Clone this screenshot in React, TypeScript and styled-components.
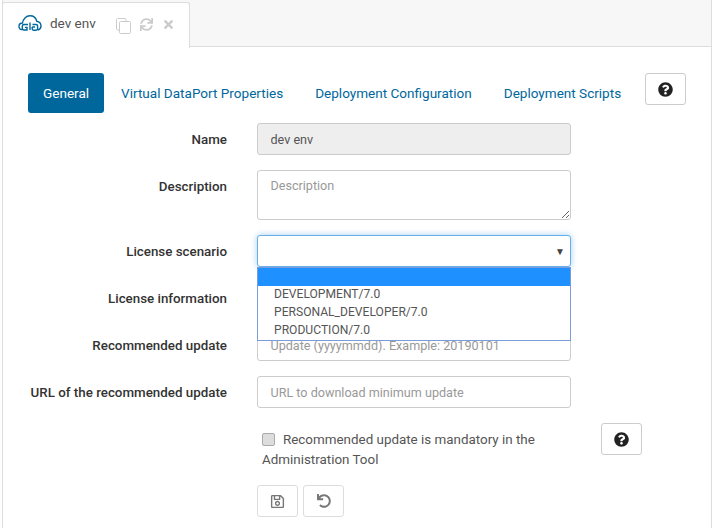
import { createGlobalStyle, styled } from 'styled-components';
import { FaQuestionCircle, FaRegSave, FaSync, FaTimes, FaUndo } from 'react-icons/fa';

const GlobalStyle = createGlobalStyle`
  html, body {
    margin: 0;
    padding: 0;
    background: #fff;
    height: 100%;
    overflow: hidden;
  }
  * { box-sizing: border-box; }
  body {
    font-family: Roboto, "Liberation Sans", sans-serif;
    font-size: 12.6px;
    color: #555;
  }
`;

const Page = styled.div`
  width: 710px;
  height: 528px;
  margin-left: 2px;
  border-left: 1px solid #ddd;
  border-right: 1px solid #ddd;
  position: relative;
`;

const TabStrip = styled.div`
  height: 47px;
  padding-top: 2px;
  background: #f7f7f7;
  border-bottom: 1px solid #ddd;
  display: flex;
`;

const DocTab = styled.div`
  width: 188px;
  height: 46px;
  margin-left: -1px;
  background: #fff;
  border: 1px solid #ddd;
  border-bottom: 0;
  border-radius: 3px 3px 0 0;
  padding: 11px 0 0 15px;
  display: flex;
  align-items: flex-start;
`;

const DocTitle = styled.span`
  margin-left: 8px;
  line-height: 18px;
  width: 66px;
  font-size: 13.5px;
  color: #555;
`;

const DocAction = styled.span`
  color: #ccc;
  display: flex;
  margin-top: 4px;
  margin-right: 9px;
`;

const Body = styled.div`
  padding: 26px 0 0 25px;
`;

const Nav = styled.div`
  display: flex;
  align-items: flex-start;
  height: 50px;
`;

const Pill = styled.a<{ $active?: boolean }>`
  height: 40px;
  padding: 0 15px;
  display: flex;
  align-items: center;
  border-radius: 3px;
  margin-right: 2px;
  background: ${(p) => (p.$active ? '#00679c' : 'transparent')};
  color: ${(p) => (p.$active ? '#fff' : '#00679c')};
  font-size: 13.55px;
`;

const IconButton = styled.button`
  width: 41px;
  height: 32px;
  background: #fff;
  border: 1px solid #ccc;
  border-radius: 3px;
  display: flex;
  align-items: center;
  justify-content: center;
  padding: 0;
  color: #222;
  font-size: 15px;
`;

const MutedButton = styled(IconButton)`
  color: #777;
  border-color: #ddd;
`;

const NavHelp = styled(IconButton)`
  margin-left: 7px;
`;

const Row = styled.div`
  display: flex;
  margin-bottom: 15px;
`;

const Label = styled.label`
  width: 199px;
  text-align: right;
  font-weight: 500;
  font-size: 13.35px;
  color: #333;
  padding-top: 8px;
  line-height: 18px;
  margin-right: 30px;
  white-space: nowrap;
`;

const Input = styled.input`
  width: 314px;
  height: 32px;
  border: 1px solid #ccc;
  border-radius: 3px;
  padding: 0 12.5px;
  font: inherit;
  color: #555;
  background: #fff;
  &:disabled { background: #eee; }
  &::placeholder { color: #999; opacity: 1; }
`;

const TextArea = styled.textarea`
  width: 314px;
  height: 50px;
  border: 1px solid #ccc;
  border-radius: 3px;
  padding: 7px 12.5px;
  font: inherit;
  &::placeholder { color: #999; opacity: 1; }
`;

const SelectWrap = styled.div`
  position: relative;
  width: 314px;
  height: 32px;
`;

const SelectBox = styled.div`
  height: 32px;
  border: 1px solid #66afe9;
  border-radius: 3px;
  box-shadow: 0 0 6px rgba(102, 175, 233, 0.6);
  background: #fff;
  display: flex;
  align-items: center;
  justify-content: flex-end;
  padding-right: 5px;
  font-size: 10px;
  color: #444;
`;

const Dropdown = styled.ul`
  position: absolute;
  left: 0;
  top: 32px;
  width: 314px;
  height: 74px;
  margin: 0;
  padding: 0;
  list-style: none;
  background: #fff;
  border: 1px solid #7a9cd8;
  z-index: 5;
`;

const Option = styled.li<{ $selected?: boolean }>`
  height: 18px;
  line-height: 16px;
  padding-left: 16px;
  font-size: 12.1px;
  color: #555;
  background: ${(p) => (p.$selected ? '#1e90ff' : 'transparent')};
`;

const CheckRow = styled.div`
  display: flex;
  margin-left: 229px;
  margin-bottom: 30px;
`;

const CheckText = styled.div`
  width: 295px;
  line-height: 20px;
  padding: 7px 0 0 5px;
  font-size: 13.4px;
  height: 32px;
`;

const Check = styled.input`
  appearance: none;
  width: 13px;
  height: 13px;
  margin: 0 8px 0 0;
  vertical-align: -2px;
  background: #ddd;
  border: 1px solid #aaa;
  border-radius: 2px;
`;

const CheckHelp = styled(IconButton)`
  margin-left: 49px;
`;

const Actions = styled.div`
  display: flex;
  gap: 5px;
  margin-left: 229px;
`;

const CloudLogo = () => (
  <svg width="24" height="18" viewBox="0 0 24 18" fill="none" stroke="#00679c" strokeWidth="1.4">
    <path d="M4 15.5H3.5C2 15.5 1 14 1 12.5C1 10.5 2.5 9 4.5 9C5 5 8 1.8 12 1.8C15.5 1.8 18 4.2 18.7 7.2C21 7.6 23 9.5 23 12C23 14 21.8 15.5 20 16" />
    <path d="M10 10.5H6C5 10.5 4.3 11.2 4.3 12V14.5C4.3 15.4 5 16 6 16H9V13.4H7" />
    <path d="M12 8.5V16" />
    <path d="M14.2 13V14.8C14.2 15.5 14.8 16.2 15.6 16.2H18C19 16.2 19.6 15.5 19.6 14.8V12C19.6 11.2 19 10.5 18 10.5H14.5M14.2 13H17" />
  </svg>
);

const CopyIcon = () => (
  <svg width="15" height="16" viewBox="0 0 15 16" fill="#fff" stroke="#ccc" strokeWidth="1">
    <path d="M10 3V1.5C10 1 9.5 .5 9 .5H1.5C1 .5 .5 1 .5 1.5V11C.5 11.5 1 12 1.5 12H3.5" fill="none" />
    <rect x="3.5" y="3.5" width="11" height="12" rx="1" />
  </svg>
);

const App = () => (
  <>
    <GlobalStyle />
    <Page>
      <TabStrip>
        <DocTab>
          <CloudLogo />
          <DocTitle>dev env</DocTitle>
          <DocAction><CopyIcon /></DocAction>
          <DocAction><FaSync size={13} /></DocAction>
          <DocAction><FaTimes size={13} /></DocAction>
        </DocTab>
      </TabStrip>
      <Body>
        <Nav>
          <Pill $active>General</Pill>
          <Pill>Virtual DataPort Properties</Pill>
          <Pill>Deployment Configuration</Pill>
          <Pill>Deployment Scripts</Pill>
          <NavHelp><FaQuestionCircle /></NavHelp>
        </Nav>
        <Row>
          <Label>Name</Label>
          <Input disabled value="dev env" readOnly />
        </Row>
        <Row>
          <Label>Description</Label>
          <TextArea placeholder="Description" />
        </Row>
        <Row>
          <Label>License scenario</Label>
          <SelectWrap>
            <SelectBox>▼</SelectBox>
            <Dropdown>
              <Option $selected />
              <Option>DEVELOPMENT/7.0</Option>
              <Option>PERSONAL_DEVELOPER/7.0</Option>
              <Option>PRODUCTION/7.0</Option>
            </Dropdown>
          </SelectWrap>
        </Row>
        <Row>
          <Label>License information</Label>
          <Input />
        </Row>
        <Row>
          <Label>Recommended update</Label>
          <Input placeholder="Update (yyyymmdd). Example: 20190101" />
        </Row>
        <Row>
          <Label>URL of the recommended update</Label>
          <Input placeholder="URL to download minimum update" />
        </Row>
        <CheckRow>
          <CheckText>
            <Check type="checkbox" />
            Recommended update is mandatory in the Administration Tool
          </CheckText>
          <CheckHelp><FaQuestionCircle /></CheckHelp>
        </CheckRow>
        <Actions>
          <MutedButton><FaRegSave size={15} /></MutedButton>
          <MutedButton><FaUndo size={14} /></MutedButton>
        </Actions>
      </Body>
    </Page>
  </>
);

export default App;
